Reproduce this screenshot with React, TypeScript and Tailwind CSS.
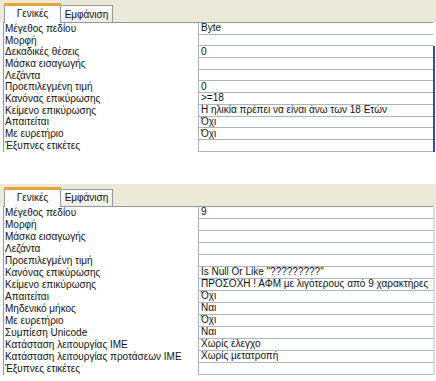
import React from "react";

type Row = [string, string];

const top: Row[] = [
  ["Μέγεθος πεδίου", "Byte"],
  ["Μορφή", ""],
  ["Δεκαδικές θέσεις", "0"],
  ["Μάσκα εισαγωγής", ""],
  ["Λεζάντα", ""],
  ["Προεπιλεγμένη τιμή", "0"],
  ["Κανόνας επικύρωσης", ">=18"],
  ["Κείμενο επικύρωσης", "Η ηλικία πρέπει να είναι άνω των 18 Ετών"],
  ["Απαιτείται", "Όχι"],
  ["Με ευρετήριο", "Όχι"],
  ["Έξυπνες ετικέτες", ""],
];

const bottom: Row[] = [
  ["Μέγεθος πεδίου", "9"],
  ["Μορφή", ""],
  ["Μάσκα εισαγωγής", ""],
  ["Λεζάντα", ""],
  ["Προεπιλεγμένη τιμή", ""],
  ["Κανόνας επικύρωσης", 'Is Null Or Like "?????????"'],
  ["Κείμενο επικύρωσης", "ΠΡΟΣΟΧΗ ! ΑΦΜ με λιγότερους από 9 χαρακτήρες"],
  ["Απαιτείται", "Όχι"],
  ["Μηδενικό μήκος", "Ναι"],
  ["Με ευρετήριο", "Όχι"],
  ["Συμπίεση Unicode", "Ναι"],
  ["Κατάσταση λειτουργίας IME", "Χωρίς έλεγχο"],
  ["Κατάσταση λειτουργίας προτάσεων IME", "Χωρίς μετατροπή"],
  ["Έξυπνες ετικέτες", ""],
];

function Tabs() {
  return (
    <div className="h-[22px] bg-[#ECE9D8] flex items-end pl-[4px]">
      <div className="relative h-[20px] w-[57px] bg-[#FCFCFE] border-l border-r border-[#919B9C] flex items-center justify-center pb-[1px] z-10 -mb-px">
        <div className="absolute left-[-1px] right-[-1px] top-0 h-[3px] bg-[#E8A33C] rounded-t-[2px]" />
        <span className="pt-[2px]">Γενικές</span>
      </div>
      <div className="h-[17px] w-[52px] border-t border-r border-[#919B9C] bg-gradient-to-b from-[#FEFEFE] to-[#ECEBE6] flex items-center justify-center">
        Εμφάνιση
      </div>
    </div>
  );
}

function Grid({ rows, rowH, blue }: { rows: Row[]; rowH: string; blue?: boolean }) {
  return (
    <div className="flex">
      <div className="w-[3px]" />
      <div className="w-[430px] border-l border-t border-[#919B9C]">
        {rows.map(([l, v], i) => (
          <div key={i} className={`flex ${rowH}`}>
            <div className="w-[194px] pl-[1px] leading-none flex items-center whitespace-nowrap">{l}</div>
            <div className="flex-1 border-l border-b border-[#A7B4C7] pl-[2px] leading-none flex items-center whitespace-nowrap overflow-hidden">
              {v}
            </div>
          </div>
        ))}
      </div>
      <div className={`w-[2px] ${blue ? "bg-[#31509C] mt-[24px]" : "bg-[#D8DCE4]"}`} />
    </div>
  );
}

export default function App() {
  return (
    <div className="w-[436px] h-[381px] bg-white text-[10px] text-[#111] font-['Liberation_Sans',sans-serif] overflow-hidden">
      <Tabs />
      <Grid rows={top} rowH="h-[11.7px]" blue />
      <div className="h-[32px]" />
      <Tabs />
      <Grid rows={bottom} rowH="h-[12px]" />
    </div>
  );
}
